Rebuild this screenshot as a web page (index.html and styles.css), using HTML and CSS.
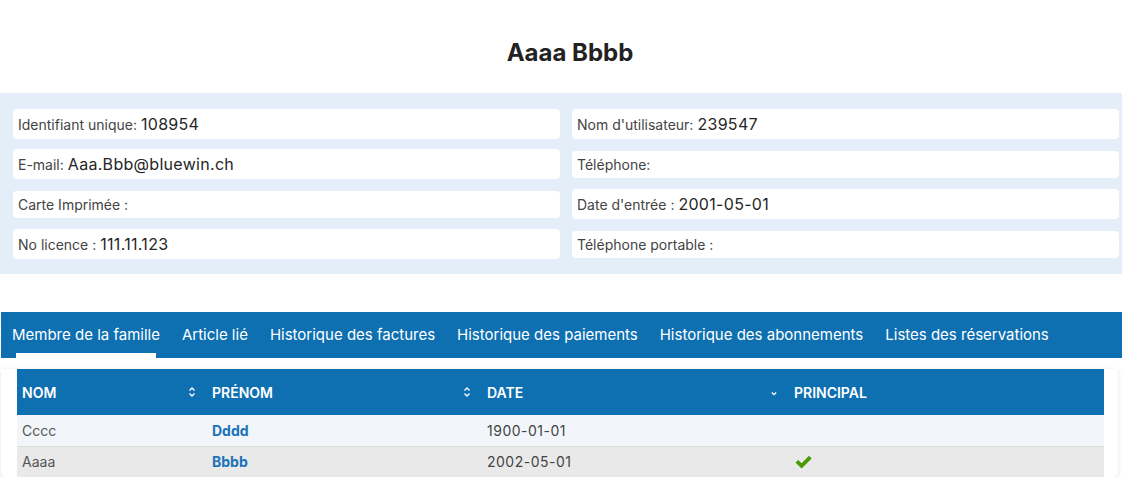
FILE: index.html
```html
<!DOCTYPE html>
<html lang="fr">
<head>
<meta charset="utf-8">
<title>Aaaa Bbbb</title>
<link rel="stylesheet" href="styles.css">
</head>
<body>
<div class="page">
  <h1 class="title">Aaaa Bbbb</h1>
  <section class="info">
    <div class="card"><span class="lbl">Identifiant unique:</span> <span class="val">108954</span></div>
    <div class="card"><span class="lbl">Nom d'utilisateur:</span> <span class="val">239547</span></div>
    <div class="card"><span class="lbl">E-mail:</span> <span class="val">Aaa.Bbb@bluewin.ch</span></div>
    <div class="card"><span class="lbl">Téléphone:</span></div>
    <div class="card"><span class="lbl">Carte Imprimée :</span></div>
    <div class="card"><span class="lbl">Date d'entrée :</span> <span class="val">2001-05-01</span></div>
    <div class="card"><span class="lbl">No licence :</span> <span class="val">111.11.123</span></div>
    <div class="card"><span class="lbl">Téléphone portable :</span></div>
  </section>

  <nav class="tabs">
    <a class="tab active">Membre de la famille</a>
    <a class="tab">Article lié</a>
    <a class="tab">Historique des factures</a>
    <a class="tab">Historique des paiements</a>
    <a class="tab">Historique des abonnements</a>
    <a class="tab">Listes des réservations</a>
  </nav>

  <div class="table-card">
    <table class="grid">
      <colgroup>
        <col class="c1"><col class="c2"><col class="c3"><col class="c4">
      </colgroup>
      <thead>
        <tr>
          <th><div class="th-in"><span>NOM</span>
            <svg class="sort" viewBox="0 0 8 12" width="8" height="12"><path d="M1.5 4.5 L4 2 L6.5 4.5 M1.5 7.5 L4 10 L6.5 7.5" fill="none" stroke="#fff" stroke-width="1.3"/></svg></div></th>
          <th><div class="th-in"><span>PRÉNOM</span>
            <svg class="sort" viewBox="0 0 8 12" width="8" height="12"><path d="M1.5 4.5 L4 2 L6.5 4.5 M1.5 7.5 L4 10 L6.5 7.5" fill="none" stroke="#fff" stroke-width="1.3"/></svg></div></th>
          <th><div class="th-in"><span>DATE</span>
            <svg class="sort" viewBox="0 0 8 12" width="8" height="12"><path d="M1.8 6.5 L4 8.7 L6.2 6.5" fill="none" stroke="#fff" stroke-width="1.3"/></svg></div></th>
          <th><div class="th-in"><span>PRINCIPAL</span></div></th>
        </tr>
      </thead>
      <tbody>
        <tr class="odd">
          <td class="nom">Cccc</td>
          <td class="prenom">Dddd</td>
          <td class="date">1900-01-01</td>
          <td></td>
        </tr>
        <tr class="even">
          <td class="nom">Aaaa</td>
          <td class="prenom">Bbbb</td>
          <td class="date">2002-05-01</td>
          <td class="check"><svg viewBox="0 0 20 16" width="19" height="16"><path d="M1.5 8.5 L4.5 5.8 L8 9.3 L15.8 1.5 L18.6 4.3 L8 14.8 Z" fill="#4b9a06"/></svg></td>
        </tr>
      </tbody>
    </table>
  </div>
</div>
</body>
</html>
```

FILE: styles.css
```css
* { box-sizing: border-box; }
html, body { margin: 0; padding: 0; background: #fff; }
body { font-family: Inter, "Noto Sans", sans-serif; color: #333; }

.page { width: 1122px; }

.title {
  margin: 0;
  padding: 38px 0 0 18px;
  height: 93px;
  text-align: center;
  font-weight: 700;
  font-size: 24px;
  line-height: 30px;
  color: #222;
}

.info {
  background: #e3eef8;
  padding: 16px 3px 15px 13px;
  display: grid;
  grid-template-columns: 547px 547px;
  column-gap: 12px;
  row-gap: 10px;
  grid-auto-rows: 30px;
  align-items: center;
}
.card {
  background: #fff;
  border-radius: 4px;
  padding: 5px 5px;
  min-height: 27px;
  display: flex;
  align-items: center;
  gap: 4px;
  white-space: pre;
}
.lbl { font-size: 14px; line-height: 17px; color: #444; }
.val { font-size: 16px; line-height: 20px; color: #262626; letter-spacing: 0.3px; }

.tabs {
  margin: 38px 0 0 1px;
  height: 46px;
  background: #0e6fb1;
  display: flex;
  align-items: stretch;
}
.tab {
  position: relative;
  display: flex;
  align-items: center;
  padding: 0 11px 2px;
  color: #fff;
  font-size: 15px;
  white-space: nowrap;
}
.tab.active::after {
  content: "";
  position: absolute;
  left: 15px;
  right: 15px;
  bottom: 0;
  height: 5px;
  background: #fff;
}

.table-card {
  margin: 11px 4px 0 1px;
  padding: 0 14px 0 16px;
  background: #fff;
  border-radius: 0 0 5px 5px;
  box-shadow: 0 1px 4px rgba(0,0,0,0.12);
  height: 108px;
}
.grid {
  border-collapse: collapse;
  table-layout: fixed;
  width: 1087px;
}
.c1 { width: 190px; }
.c2 { width: 275px; }
.c3 { width: 307px; }
.c4 { width: 315px; }

.grid thead th {
  background: #0e6fb1;
  color: #fff;
  height: 46px;
  padding: 0;
  text-align: left;
  font-size: 14px;
  font-weight: 600;
}
.th-in {
  display: flex;
  align-items: center;
  justify-content: space-between;
  padding: 0 11px 0 5px;
}
.sort { display: block; }
.grid td {
  height: 31px;
  padding: 0 5px;
  font-size: 14px;
}
.grid tr.odd td { background: #f2f6fa; border-bottom: 1px solid #dcdcdc; }
.grid tr.even td { background: #e9e9e9; }
.nom { color: #555; }
.prenom { color: #1a73b9; font-weight: 700; }
.date { color: #444; font-size: 15px; letter-spacing: 0.5px; }
.check svg { display: block; }
```
